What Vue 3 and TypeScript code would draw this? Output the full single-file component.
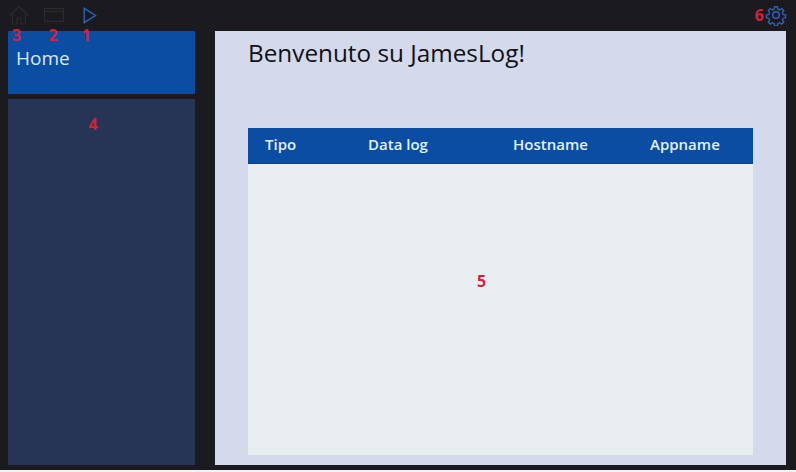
<template>
  <div class="page">
    <header class="topbar">
      <div class="tools">
        <span class="tool home-tool">
          <svg width="20" height="20" viewBox="0 0 20 20" fill="none" stroke="#2c2c30" stroke-width="1.2">
            <path d="M.8 10.500 10 1.500l9.200 9" />
            <path d="M3.500 8.500V19H8v-6h4v6h4.500V8.500" />
          </svg>
          <span class="mark">3</span>
        </span>
        <span class="tool window-tool">
          <svg width="20" height="14" viewBox="0 0 20 14" fill="none" stroke="#2c2c30" stroke-width="1.2">
            <rect x="0.600" y="0.600" width="18.800" height="12.800" />
            <path d="M1 3.500h18" />
          </svg>
          <span class="mark">2</span>
        </span>
        <span class="tool play-tool">
          <svg width="14" height="17" viewBox="0 0 14 17" fill="none" stroke="#2a64b8" stroke-width="1.400">
            <path d="M1.200 1.300v14.400L12.500 8.500z" />
          </svg>
          <span class="mark">1</span>
        </span>
      </div>
      <div class="settings">
        <span class="mark-inline">6</span>
        <svg width="22" height="22" viewBox="0 0 24 24" fill="none" stroke="#2f66b8" stroke-width="1.600">
          <circle cx="12" cy="12" r="3.600" />
          <path d="M10.300 2h3.400l.6 3 2.100.9 2.600-1.700 2.400 2.400-1.700 2.600.9 2.100 3 .6v3.400l-3 .6-.9 2.100 1.700 2.600-2.400 2.400-2.600-1.700-2.100.9-.6 3h-3.400l-.6-3-2.100-.9-2.600 1.700-2.400-2.400 1.700-2.600-.9-2.100-3-.6v-3.400l3-.6.9-2.100-1.700-2.600 2.400-2.400 2.600 1.700 2.100-.9z" transform="translate(1.200 1.200) scale(.9)" />
        </svg>
      </div>
    </header>

    <div class="content">
      <aside class="sidebar">
        <div class="home-card">Home</div>
        <div class="side-panel">
          <span class="mark panel-mark">4</span>
        </div>
      </aside>

      <main class="main">
        <h1 class="title">Benvenuto su JamesLog!</h1>
        <section class="log-table">
          <div class="log-head">
            <span v-for="col in columns" :key="col">{{ col }}</span>
          </div>
          <div class="log-body">
            <span class="mark body-mark">5</span>
          </div>
        </section>
      </main>
    </div>
  </div>
</template>

<script setup lang="ts">
const columns: string[] = ['Tipo', 'Data log', 'Hostname', 'Appname'];
</script>

<style>
html,
body {
  margin: 0;
  background: #f2f2f2;
}
</style>

<style scoped>
.page {
  width: 796px;
  height: 470px;
  display: flex;
  flex-direction: column;
  background: #1b1b1f;
  font-family: "Open Sans", "Noto Sans", sans-serif;
  overflow: hidden;
}

.topbar {
  height: 31px;
  flex-shrink: 0;
  display: flex;
  align-items: center;
  justify-content: space-between;
  padding: 0 9px 0 8px;
}

.tools {
  display: flex;
  align-self: stretch;
}

.tool {
  position: relative;
  display: flex;
  align-items: center;
  justify-content: center;
  padding-bottom: 1px;
}

.home-tool {
  width: 20px;
  margin-left: 1px;
}

.window-tool {
  width: 20px;
  margin-left: 15px;
}

.play-tool {
  width: 14px;
  margin-left: 19px;
}

.mark,
.mark-inline {
  color: #d8203a;
  font-family: "Open Sans", sans-serif;
  font-weight: 700;
  font-size: 16px;
  line-height: 16px;
}

.mark {
  position: absolute;
  top: 27px;
  left: 0;
  right: 0;
  text-align: center;
  z-index: 1;
}

.home-tool .mark {
  left: -1px;
  right: 4px;
}

.window-tool .mark {
  left: -1px;
  right: 1px;
}

.play-tool .mark {
  left: -4px;
  right: 4px;
}

.settings {
  display: flex;
  align-items: center;
  gap: 1px;
  padding-bottom: 2px;
}

.content {
  flex: 1;
  min-height: 0;
  display: flex;
  gap: 20px;
  padding: 0 10px 5px 8px;
}

.sidebar {
  width: 187px;
  flex-shrink: 0;
  display: flex;
  flex-direction: column;
  gap: 5px;
}

.home-card {
  height: 63px;
  box-sizing: border-box;
  padding: 13px 8px 0;
  background: #0a4da3;
  color: #dbe9f7;
  font-size: 19px;
  line-height: 28px;
}

.side-panel {
  position: relative;
  flex: 1;
  background: #263556;
}

.panel-mark {
  top: 17px;
  left: 0;
  width: 170px;
}

.main {
  flex: 1;
  display: flex;
  flex-direction: column;
  padding: 0 33px 10px;
  background: #d4daec;
}

.title {
  margin: 0;
  height: 97px;
  color: #101015;
  font-size: 24.300px;
  font-weight: 400;
  line-height: 43px;
}

.log-table {
  flex: 1;
  display: flex;
  flex-direction: column;
}

.log-head {
  height: 36px;
  flex-shrink: 0;
  display: grid;
  grid-template-columns: 103px 145px 137px 1fr;
  align-items: center;
  padding-left: 17px;
  padding-bottom: 3px;
  box-sizing: border-box;
  background: #0a4da3;
  border-bottom: 1px solid #0b3f80;
  color: #e4f1fb;
  font-size: 15px;
  font-weight: 600;
}

.log-body {
  position: relative;
  flex: 1;
  background: #e9eff1;
}

.body-mark {
  top: 109px;
  left: 0;
  width: 467px;
}
</style>
